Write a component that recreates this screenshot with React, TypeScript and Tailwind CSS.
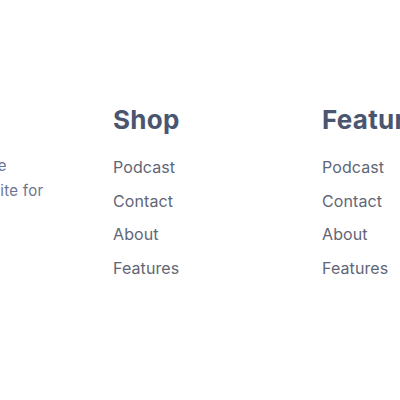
import React from "react";

const links = ["Podcast", "Contact", "About", "Features"];

function LinkColumn({ title }: { title: string }) {
  return (
    <div className="w-[209px] shrink-0">
      <h3 className="text-[26px] leading-[32px] font-bold tracking-[0.3px] text-[#4a5670] whitespace-nowrap">
        {title}
      </h3>
      <ul className="mt-[20px] flex flex-col gap-[11.7px]">
        {links.map((l) => (
          <li key={l} className="text-[16px] leading-[22px] tracking-[0.1px] text-[#5f6676] whitespace-nowrap">
            {l}
          </li>
        ))}
      </ul>
    </div>
  );
}

export default function App() {
  return (
    <div className="w-[400px] h-[400px] overflow-hidden bg-white font-['Inter',sans-serif]">
      <div className="flex -ml-[96px] pt-[104px]">
        <div className="w-[209px] shrink-0 pt-[49px] text-[15px] leading-[25px] tracking-[0.3px] text-[#6c7391]">
          <p className="whitespace-nowrap -ml-[6px]">Your daily vibe</p>
          <p className="whitespace-nowrap -ml-[12px]">The best website for</p>
        </div>
        <LinkColumn title="Shop" />
        <LinkColumn title="Features" />
      </div>
    </div>
  );
}
